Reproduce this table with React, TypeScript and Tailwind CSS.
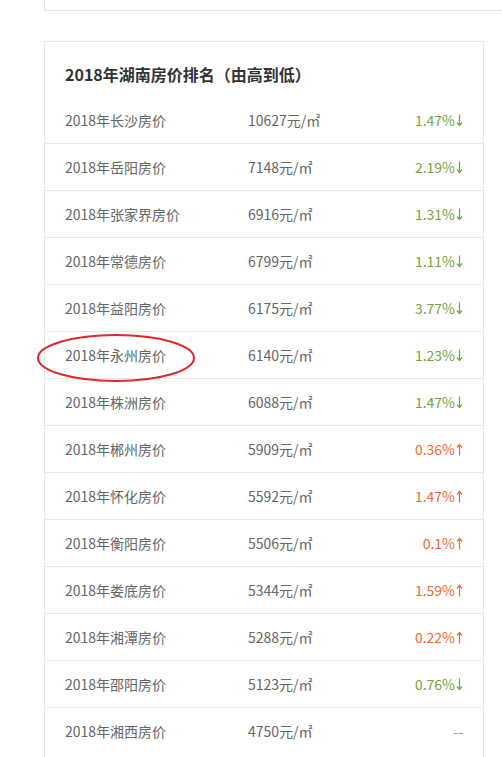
import React from "react";

type Row = {
    city: string,
    price: string,
    change: string,
    dir: "down" | "up" | "none"
}

const rows: Row[] = [
    { city: "长沙", price: "10627", change: "1.47%", dir: "down" },
    { city: "岳阳", price: "7148", change: "2.19%", dir: "down" },
    { city: "张家界", price: "6916", change: "1.31%", dir: "down" },
    { city: "常德", price: "6799", change: "1.11%", dir: "down" },
    { city: "益阳", price: "6175", change: "3.77%", dir: "down" },
    { city: "永州", price: "6140", change: "1.23%", dir: "down" },
    { city: "株洲", price: "6088", change: "1.47%", dir: "down" },
    { city: "郴州", price: "5909", change: "0.36%", dir: "up" },
    { city: "怀化", price: "5592", change: "1.47%", dir: "up" },
    { city: "衡阳", price: "5506", change: "0.1%", dir: "up" },
    { city: "娄底", price: "5344", change: "1.59%", dir: "up" },
    { city: "湘潭", price: "5288", change: "0.22%", dir: "up" },
    { city: "邵阳", price: "5123", change: "0.76%", dir: "down" },
    { city: "湘西", price: "4750", change: "--", dir: "none" },
];

// thin arrow like the original site's font draws it
const Arrow = ({ up }: { up?: boolean }) => (
    <svg width="7" height="13" viewBox="0 0 7 13" className={"ml-[1px] " + (up ? "" : "rotate-180")}>
        <path d="M3.5 1.5 V12.5 M1 4.5 L3.5 1.5 L6 4.5" fill="none" stroke="currentColor" strokeWidth="1.2" />
    </svg>
)

const App = () => {
    return (
        <div className="w-[502px] h-[757px] overflow-hidden bg-white" style={{ fontFamily: '"Noto Sans CJK SC", "Liberation Sans", sans-serif' }}>

            {/* previous card, cut off */}
            <div className="ml-[44px] h-[11px] border-l border-b border-[#e3e3e3]" />

            {/* ranking card */}
            <div className="relative ml-[44px] mt-[30px] w-[440px] pb-[20px] border-t border-l border-r border-[#e8e8e8]">
                <h2 className="pl-[20px] pt-[20px] pb-[11px] leading-[24px] text-[16px] font-bold text-[#333]">
                    2018年湖南房价排名（由高到低）
                </h2>

                {rows.map((row, i) => (
                    <div key={row.city} className={"h-[47px] flex items-center pl-[20px] pr-[20px] text-[14px] text-[#666] " + (i < rows.length - 1 ? "border-b border-[#e8e8e8]" : "")}>
                        <span className="w-[183px]">2018年{row.city}房价</span>
                        <span className="flex-1">{row.price}元/㎡</span>
                        {row.dir === "down" && <span className="flex items-center text-[#72a53a]">{row.change}<Arrow /></span>}
                        {row.dir === "up" && <span className="flex items-center text-[#f0692f]">{row.change}<Arrow up /></span>}
                        {row.dir === "none" && <span className="text-[#999]">{row.change}</span>}
                    </div>
                ))}

                {/* red circle annotation */}
                <svg className="absolute left-[-10px] top-[291px]" width="162" height="52" viewBox="0 0 162 52">
                    <ellipse cx="81" cy="25" rx="78" ry="23" fill="none" stroke="#e0272b" strokeWidth="2" />
                </svg>
            </div>
        </div>
    )
}

export default App;
